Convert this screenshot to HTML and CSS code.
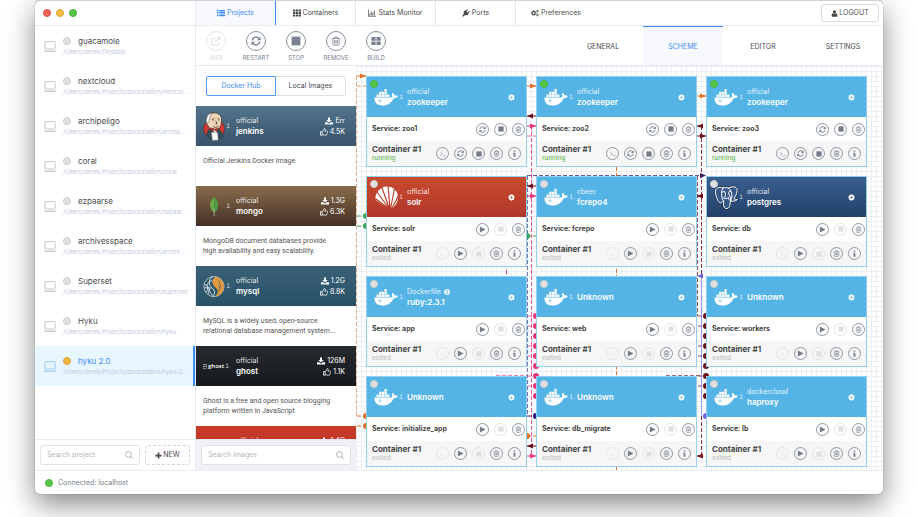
FILE: index.html
```html
<!DOCTYPE html>
<html lang="en">
<head>
<meta charset="utf-8">
<title>DockStation</title>
<link rel="stylesheet" href="styles.css">
</head>
<body>
<svg class="sprite" aria-hidden="true">
  <symbol id="i-monitor" viewBox="0 0 12 11"><rect x="1" y=".6" width="10" height="7.4" rx=".6" fill="none" stroke="currentColor"/><path d="M0 10.2h12" stroke="currentColor" stroke-width="1.2"/></symbol>
  <symbol id="i-list" viewBox="0 0 16 14"><path d="M0 1h3v2.4H0zM0 4.4h3v2.4H0zM0 7.8h3v2.4H0zM0 11.2h3v2.4H0zM4.500 1H16v2.400H4.500zM4.500 4.400H16v2.400H4.500zM4.500 7.800H16v2.400H4.500zM4.500 11.200H16v2.400H4.500z" fill="currentColor"/></symbol>
  <symbol id="i-grid" viewBox="0 0 16 14"><path d="M0 0h4.500v4H0zM5.700 0h4.500v4H5.700zM11.400 0H16v4h-4.600zM0 5h4.500v4H0zM5.700 5h4.500v4H5.700zM11.400 5H16v4h-4.600zM0 10h4.500v4H0zM5.700 10h4.500v4H5.700zM11.400 10H16v4h-4.600z" fill="currentColor"/></symbol>
  <symbol id="i-chart" viewBox="0 0 16 14"><path d="M.6 0v13.400H16M3.600 11.500V8M6.600 11.500V4M9.600 11.500V6M12.800 11.500V2" fill="none" stroke="currentColor" stroke-width="1.600"/></symbol>
  <symbol id="i-plug" viewBox="0 0 16 16"><path d="M10 1.200a1 1 0 0 1 1.500 1.300L9 5l2 2 2.700-2.600a1 1 0 0 1 1.300 1.500L12.400 8.500l1.200 1.200-1.200 1.300c-1.900 1.900-4.500 2.100-6.400 1L3.200 15H1v-2.200l2.800-2.800C2.700 8 3 5.500 4.900 3.600L6.200 2.400l1.200 1.200z" fill="currentColor"/></symbol>
  <symbol id="i-cogs" viewBox="0 0 18 16"><g fill="none" stroke="currentColor"><circle cx="6" cy="8" r="3.600" stroke-width="2.600"/><circle cx="6" cy="8" r="5.300" stroke-width="1.600" stroke-dasharray="2.100 2.060"/><circle cx="14.500" cy="3.600" r="1.700" stroke-width="1.500"/><circle cx="14.500" cy="3.600" r="2.700" stroke-width="1" stroke-dasharray="1.400 1.430"/><circle cx="14.500" cy="12.400" r="1.700" stroke-width="1.500"/><circle cx="14.500" cy="12.400" r="2.700" stroke-width="1" stroke-dasharray="1.400 1.430"/></g></symbol>
  <symbol id="i-user" viewBox="0 0 14 16"><circle cx="7" cy="4.400" r="3.700" fill="currentColor"/><path d="M3.500 7.400C1 8 .4 10.500.4 13c0 1.500 1 2.400 2.300 2.400h8.600c1.300 0 2.300-.9 2.300-2.400 0-2.500-.6-5-3.100-5.600C8.300 9.300 5.700 9.300 3.500 7.400z" fill="currentColor"/></symbol>
  <symbol id="i-cog" viewBox="0 0 16 16"><g fill="none" stroke="currentColor"><circle cx="8" cy="8" r="4.300" stroke-width="3.600"/><circle cx="8" cy="8" r="6.700" stroke-width="2.200" stroke-dasharray="2.800 2.460" stroke-dashoffset="1.400"/></g></symbol>
  <symbol id="i-web" viewBox="0 0 16 16"><path d="M8 3.500H3A1.500 1.500 0 0 0 1.500 5v8A1.500 1.500 0 0 0 3 14.500h8a1.500 1.500 0 0 0 1.500-1.500V9.500M6 10l7.500-7.500M9.500 1.700h5v5" fill="none" stroke="currentColor" stroke-width="1.700"/></symbol>
  <symbol id="i-refresh" viewBox="0 0 16 16"><path d="M2 7a6.200 6.200 0 0 1 10.800-3.200M14 9a6.200 6.200 0 0 1-10.800 3.200" fill="none" stroke="currentColor" stroke-width="2.200"/><path d="M15.300.8v6h-6zM.7 15.200v-6h6z" fill="currentColor"/></symbol>
  <symbol id="i-stop" viewBox="0 0 16 16"><path d="M1 1h14v14H1z" fill="currentColor"/></symbol>
  <symbol id="i-play" viewBox="0 0 16 16"><path d="M2 1l13 7-13 7z" fill="currentColor"/></symbol>
  <symbol id="i-trash" viewBox="0 0 16 16"><path d="M1.500 4h13M5.300 4l.8-2.500h3.800l.8 2.500M3 4.300V13c0 1 .6 1.700 1.500 1.700h7c.9 0 1.500-.7 1.500-1.700V4.300M6 6.500v5.700M8 6.500v5.700M10 6.500v5.700" fill="none" stroke="currentColor" stroke-width="1.300"/></symbol>
  <symbol id="i-build" viewBox="0 0 16 16"><path d="M1.500 1.500h5.300a.6.600 0 0 1 .6.600v5.300H1.500A1 1 0 0 1 .5 6.400V2.500a1 1 0 0 1 1-1zM8.700 1.500h5.800a1 1 0 0 1 1 1v3.900a1 1 0 0 1-1 1H8.700zM1.500 8.700h5.900v5.800H1.500a1 1 0 0 1-1-1V9.700a1 1 0 0 1 1-1zM8.700 8.700h5.800a1 1 0 0 1 1 1v3.800a1 1 0 0 1-1 1H8.700z" fill="currentColor"/></symbol>
  <symbol id="i-term" viewBox="0 0 16 16"><path d="M1 3l5 4.500L1 12M7 13h8" fill="none" stroke="currentColor" stroke-width="1.500"/></symbol>
  <symbol id="i-info" viewBox="0 0 16 16"><path d="M6.200 1h3.600v3.200H6.200zM4.600 6h5.200v7h1.600v2H4.600v-2h1.600V8H4.600z" fill="currentColor"/></symbol>
  <symbol id="i-download" viewBox="0 0 16 16"><path d="M6 1h4v5h3.500L8 11.200 2.500 6H6zM0 10.500h4.600L8 13.300l3.400-2.800H16V15H0z" fill="currentColor"/></symbol>
  <symbol id="i-thumb" viewBox="0 0 16 16"><path d="M1 7h3.300v7.500H1zM4.300 7.300C6 6.500 6.500 5 7.200 3.800 7.600 3 7.400 1.200 8.600 1c1.700-.1 2.200 1.700 1.700 3.200L9.600 6h4c1.400 0 1.800 1.400 1 2.300.6.800.5 1.600-.3 2.200.3.900 0 1.500-.7 1.900.2 1.300-.6 2.100-2 2.100-3 .1-4.300-.6-7.300-1.300" fill="none" stroke="currentColor" stroke-width="1.500"/></symbol>
  <symbol id="i-search" viewBox="0 0 16 16"><circle cx="7" cy="7" r="5.800" fill="none" stroke="currentColor" stroke-width="1.500"/><path d="M11 11l4.500 4.500" stroke="currentColor" stroke-width="1.800"/></symbol>
  <symbol id="i-plus" viewBox="0 0 16 16"><path d="M6 1h4v5h5v4h-5v5H6v-5H1V6h5z" fill="currentColor"/></symbol>
  <symbol id="i-alert" viewBox="0 0 16 16"><circle cx="8" cy="8" r="8" fill="currentColor"/><path d="M6.800 3h2.400v6H6.800zM6.800 10.500h2.400V13H6.800z" fill="#54b4e6"/></symbol>
  <symbol id="l-docker" viewBox="0 0 50 36"><g fill="#fff"><path d="M5 12h4.600v4.800H5zM10.300 12h4.600v4.800h-4.600zM15.600 12h4.600v4.800h-4.600zM20.900 12h4.600v4.800h-4.600zM26.200 12h4.600v4.800h-4.600zM10.300 6.500h4.600v4.800h-4.600zM15.600 6.500h4.600v4.800h-4.600zM20.900 6.500h4.600v4.800h-4.600zM20.900 1h4.600v4.800h-4.600z"/><path d="M1 18h30c3 0 5-.8 6.200-2-2-2.500-1.800-5 0-7.500 2.300 1.500 3.500 3.300 3.600 5.500 2.500-.6 5-.3 7 1-1.300 3.200-4 4.500-8.500 4.400C35.500 28.500 28 34 17 34 6 34 .6 28.500 1 18z"/></g><circle cx="12" cy="24.500" r="2" fill="#fff" stroke="#54b4e6" stroke-width="1.200"/></symbol>
  <symbol id="l-solr" viewBox="0 0 50 50"><path d="M3 30C1 18 10 5 24 3c14-1 24 9 24 22 0 10-7 18-13 23l-8-2z" fill="#fff"/><path d="M31 48 5 37M31 48 1 26M31 48 5 13M31 48 15 3M32 48 28-1M33 48 42 2M35 48 52 16" fill="none" stroke="#bd422f" stroke-width="2.400"/></symbol>
  <symbol id="l-postgres" viewBox="0 0 50 50"><g fill="#36598a" stroke="#1b2c47" stroke-width="4.500" stroke-linejoin="round"><path d="M18 6C10 2 2 6 3 16c1 8 5 18 9 20 3 1 4-3 7-5 0 6-1 14 4 16 5 1 9-2 9-8l1-7c6 1 12 0 14-3-2 0-5 0-7-2 5-7 9-19 4-22-5-3-11-1-15 1-4-1-8-1-11 0z"/></g><g fill="#36598a" stroke="#fff" stroke-width="2" stroke-linejoin="round" stroke-linecap="round"><path d="M18 6C10 2 2 6 3 16c1 8 5 18 9 20 3 1 4-3 7-5 0 6-1 14 4 16 5 1 9-2 9-8l1-7c6 1 12 0 14-3-2 0-5 0-7-2 5-7 9-19 4-22-5-3-11-1-15 1-4-1-8-1-11 0z"/><path d="M18 6c-4 5-3 12-2 18 0 3 0 5 3 7M29 6c5 4 7 10 7 18-1 4-2 5-3 8M22 14c-3-2-5-1-6 1M33 13c-2-1-4 0-4 2 0 5 6 9 4 16-3-1-4-3-4-6-3 2-7 3-10 1 4-2 5-6 3-12" fill="none"/></g></symbol>
  <symbol id="l-jenkins" viewBox="0 0 50 66"><ellipse cx="25" cy="38" rx="24" ry="22" fill="#d33833" stroke="#222"/><path d="M8 24C6 8 16 1 27 2c11 1 17 9 15 21-1 11-6 18-14 18S11 36 8 24z" fill="#f0d6b7" stroke="#222" stroke-width="1.500"/><path d="M8 27C5 12 12 2 24 2c-7 4-9 8-9 14l-2 6z" fill="#fff" stroke="#222"/><path d="M20 17l6-2M33 15l5 2M22 20h2M35 20h2M29 20l3 7h-4M23 33c5 3 9 2 13-1" fill="none" stroke="#222" stroke-width="1.600"/><path d="M12 40l14 4 12-5 8 16-10 8H20L8 54z" fill="#335061" stroke="#222"/><path d="M22 41l6 9 5-10z" fill="#fff"/><path d="M25 38l-6-2v8l6-3 8 4 1-8-8 2z" fill="#d33833" stroke="#222"/><path d="M19 46h14l2 18-14 1z" fill="#fff" stroke="#555"/></symbol>
  <symbol id="l-mongo" viewBox="-16 -12 55 75"><path d="M12 1C5 9 1 16 2 24c1 8 5 13 10 17z" fill="#6cac48"/><path d="M12 1c7 8 11 15 10 23-1 8-5 13-10 17z" fill="#4d9a3f"/><path d="M12 30v20" stroke="#b8b79d" stroke-width="2"/></symbol>
  <symbol id="l-mysql" viewBox="0 0 50 50"><circle cx="25" cy="25" r="23" fill="none" stroke="#dfe8ec" stroke-width="1.500"/><path d="M28 3c14 2 22 14 19 27-2 9-10 17-20 18 8-7 9-14 2-20-8-7-11-16-1-25z" fill="#e4993c"/><path d="M21 3C12 11 12 21 20 28c8 6 8 13 2 20M3 20c7 2 11 8 12 14s5 10 9 13M7 38c4-4 4-11 2-17 4-7 8-9 13-9M3 28h12M13 42c-2-9 0-13 7-14" fill="none" stroke="#dfe8ec" stroke-width="2"/><path d="M33 9c6 6 8 13 5 20M31 39c8-4 9-10 4-17" stroke="#3a5c70" fill="none" stroke-width="1.500"/></symbol>
  <symbol id="l-ghost" viewBox="0 0 10 12"><path d="M0 1.500h10M0 6h4M6 6h4M0 10.500h6M8 10.500h2" stroke="#fff" stroke-width="2" opacity=".8"/></symbol>
</svg>

<div class="window">
  <header class="titlebar">
    <div class="lights"><i class="light red"></i><i class="light amber"></i><i class="light green"></i></div>
    <nav class="main-tabs">
      <a class="main-tab active" href="#projects"><svg class="ico8"><use href="#i-list"/></svg>Projects</a>
      <a class="main-tab" href="#containers"><svg class="ico8"><use href="#i-grid"/></svg>Containers</a>
      <a class="main-tab" href="#stats"><svg class="ico8"><use href="#i-chart"/></svg>Stats Monitor</a>
      <a class="main-tab" href="#ports"><svg class="ico8"><use href="#i-plug"/></svg>Ports</a>
      <a class="main-tab" href="#preferences"><svg class="ico8"><use href="#i-cogs"/></svg>Preferences</a>
    </nav>
    <button class="logout"><svg class="ico7"><use href="#i-user"/></svg>LOGOUT</button>
  </header>

  <div class="body">
    <aside class="sidebar">
      <nav class="projects" id="projects"></nav>
      <div class="side-foot">
        <label class="search"><input type="text" placeholder="Search project" aria-label="Search project"><svg class="ico8"><use href="#i-search"/></svg></label>
        <button class="new"><svg class="ico7"><use href="#i-plus"/></svg>NEW</button>
      </div>
    </aside>

    <main class="main">
      <div class="toolbar">
        <div class="tools">
          <button class="tool off"><span class="ring"><svg class="ico10"><use href="#i-web"/></svg></span>WEB</button>
          <button class="tool"><span class="ring"><svg class="ico10"><use href="#i-refresh"/></svg></span>RESTART</button>
          <button class="tool"><span class="ring"><svg class="ico10"><use href="#i-stop"/></svg></span>STOP</button>
          <button class="tool"><span class="ring"><svg class="ico10"><use href="#i-trash"/></svg></span>REMOVE</button>
          <button class="tool"><span class="ring"><svg class="ico10"><use href="#i-build"/></svg></span>BUILD</button>
        </div>
        <nav class="views">
          <a class="view" href="#general">GENERAL</a>
          <a class="view active" href="#scheme">SCHEME</a>
          <a class="view" href="#editor">EDITOR</a>
          <a class="view" href="#settings">SETTINGS</a>
        </nav>
      </div>

      <div class="work">
        <section class="images">
          <div class="segment">
            <button class="seg active">Docker Hub</button>
            <button class="seg">Local Images</button>
          </div>
          <div class="image-list" id="images"></div>
          <div class="images-foot">
            <label class="search"><input type="text" placeholder="Search images" aria-label="Search images"><svg class="ico8"><use href="#i-search"/></svg></label>
          </div>
        </section>

        <section class="scheme" id="scheme">
          <svg class="wires" id="wires" viewBox="356 66 527 404" aria-hidden="true"></svg>
        </section>
      </div>
    </main>
  </div>

  <footer class="status"><i class="dot green"></i>Connected: localhost</footer>
</div>
<script src="app.js"></script>
</body>
</html>
```
FILE: styles.css
```css
* { box-sizing: border-box; }
body {
  margin: 0;
  padding: 0 35px 23px;
  background: #fff;
  color: #4a4a4a;
  font: 7px/10px Inter, "Liberation Sans", sans-serif;
  overflow: hidden;
}
a { color: inherit; text-decoration: none; }
button { margin: 0; padding: 0; border: 0; background: none; color: inherit; font: inherit; }
svg { display: block; flex: none; }
.sprite { display: none; }
.ico6 { width: 6px; height: 6px; }
.ico7 { width: 7px; height: 7px; }
.ico8 { width: 8px; height: 8px; }
.ico10 { width: 10px; height: 10px; }

.window {
  display: flex;
  flex-direction: column;
  height: calc(100vh - 23px);
  border-top: 1px solid #d2d2d2;
  border-radius: 5px;
  background: #fff;
  box-shadow: 0 0 1px rgba(0, 0, 0, .5), 0 10px 28px rgba(0, 0, 0, .48);
}

.titlebar { display: flex; height: 25px; border-bottom: 1px solid #e9ebf2; align-items: center; }
.lights { display: flex; width: 160px; padding-left: 8px; gap: 5px; }
.light { width: 8px; height: 8px; border-radius: 50%; }
.light.red { background: #ee5f54; border: 1px solid #dd5145; }
.light.amber { background: #f5bd41; border: 1px solid #dfa634; }
.light.green { background: #59c646; border: 1px solid #45b034; }
.main-tabs { display: flex; flex: 1; align-self: stretch; border-left: 1px solid #e9ebf2; }
.main-tab {
  display: flex;
  width: 80px;
  align-items: center;
  justify-content: center;
  gap: 2px;
  border-right: 1px solid #e4e6ee;
}
.main-tab:last-child { border-right: 0; }
.main-tab.active { background: #f7f9fc; color: #3c8df5; border-right: 1px solid #3c86e8; }
.logout {
  display: flex;
  width: 58px;
  height: 18px;
  margin-right: 4px;
  align-items: center;
  justify-content: center;
  gap: 1px;
  border: 1px solid #dcdcdc;
  border-radius: 3px;
}

.body { display: flex; flex: 1; min-height: 0; }
.sidebar { display: flex; flex-direction: column; width: 160px; flex: none; }
.projects { flex: 1; min-height: 0; overflow: hidden; }
.project {
  display: grid;
  grid-template-columns: 12px 8px 1fr;
  column-gap: 7px;
  height: 40px;
  padding: 9px 4px 0 9px;
  grid-template-rows: 12px 10px;
  align-items: center;
}
.project svg { width: 12px; height: 11px; grid-row: 1 / 3; color: #c4c4c4; }
.dot { width: 8px; height: 8px; border-radius: 50%; background: #e0e0e0; border: 1px solid #cfcfcf; }
.dot.green { background: #56c548; border-color: #4bb53d; }
.dot.amber { background: #f5b93b; border-color: #dba237; }
.project .name { font-size: 8px; }
.project .path {
  grid-column: 2 / 4;
  color: #c3cadb;
  font-size: 6px;
  white-space: nowrap;
}
.project.active { background: #e7f6ff; color: #3c8df5; border-right: 2px solid #3c8df5; padding-right: 2px; }
.project.active svg { color: #9ccbf5; }
.side-foot { display: flex; height: 31px; padding: 5px; gap: 5px; border-top: 1px solid #e9ebf2; }
.search {
  display: flex;
  flex: 1;
  min-width: 0;
  height: 20px;
  padding: 0 6px;
  align-items: center;
  border: 1px solid #dfe1e6;
  border-radius: 3px;
  background: #fff;
  color: #999;
}
.search input { flex: 1; min-width: 0; padding: 0; border: 0; outline: 0; background: none; font: inherit; }
.search input::placeholder { color: #b5b5b5; opacity: 1; }
.new {
  display: flex;
  width: 45px;
  height: 20px;
  align-items: center;
  justify-content: center;
  gap: 1px;
  border: 1px dashed #d5d5d5;
  border-radius: 3px;
}

.main { display: flex; flex: 1; flex-direction: column; min-width: 0; border-left: 1px solid #e9ebf2; }
.toolbar { display: flex; height: 40px; justify-content: space-between; border-bottom: 1px solid #e4e7f0; }
.tools { display: flex; padding-top: 5px; }
.tool { display: flex; flex-direction: column; width: 40px; height: 32px; align-items: center; gap: 1px; color: #798291; font-size: 6px; line-height: 11px; }
.tool.off { color: #e1e1e1; }
.ring { display: flex; width: 20px; height: 20px; flex: none; align-items: center; justify-content: center; border: 1px solid #8a919d; border-radius: 50%; }
.off .ring { border-color: #e6e6e6; }
.views { display: flex; }
.view { display: flex; width: 80px; padding-top: 1px; align-items: center; justify-content: center; border-top: 1px solid transparent; }
.view.active { background: #f7f9fc; color: #3c8df5; border-top-color: #3c8df5; }

.work { display: flex; flex: 1; min-height: 0; }
.images { display: flex; flex-direction: column; width: 160px; flex: none; }
.segment { display: flex; margin: 10px; flex: none; }
.seg { width: 50%; height: 20px; border: 1px solid #e0e0e0; border-left: 0; border-radius: 0 2px 2px 0; }
.seg.active { border: 1px solid #4f9af6; border-radius: 2px 0 0 2px; color: #3c8df5; }
.image-list { flex: 1; min-height: 0; overflow: hidden; }
.image-head { display: flex; height: 40px; padding: 0 11px 0 7px; align-items: center; color: #fff; }
.image-head .logo { display: flex; width: 33px; align-items: center; gap: 1px; }
.image-head .art { width: 22px; height: 31px; }
.image-head .titles { flex: 1; }
.titles { line-height: 11px; }
.org { display: flex; align-items: center; gap: 3px; opacity: .85; }
.title { display: block; font-size: 8px; font-weight: 600; }
.tiny { color: #fff; opacity: .7; font: 7px/8px "Liberation Mono", monospace; }
.ghost { display: flex; align-items: center; gap: 1px; font: 600 6px/10px "Open Sans", sans-serif; }
.ghost svg { width: 4px; height: 5px; }
.counts { line-height: 11px; }
.count { display: flex; align-items: center; justify-content: flex-end; gap: 2px; }
.jenkins { background: linear-gradient(#52758c, #38526a); }
.mongo { background: linear-gradient(#8a6d4b, #432e26); }
.mysql { background: linear-gradient(#3c6177, #285166); }
.ghost-bg { background: linear-gradient(#272b30, #15181d); }
.solr { background: linear-gradient(#c94a2e, #b1372b); }
.redis { background: linear-gradient(#cb3c2c, #a92b20); }
.postgres { background: linear-gradient(#3a608f, #224069); }
.docker { background: #54b4e6; }
.image-text { height: 40px; margin: 0; padding: 10px 0 0 7px; font-family: Roboto, sans-serif; color: #555; white-space: nowrap; }
.images-foot { display: flex; height: 31px; flex: none; padding: 5px; border-top: 1px solid #e4e7f0; background: #eff1f6; }

.scheme {
  position: relative;
  display: grid;
  flex: 1;
  grid-template-columns: repeat(3, 161px);
  gap: 9px;
  align-content: start;
  padding: 10px;
  overflow: hidden;
  background-color: #fff;
  background-image: linear-gradient(#ecf0f5 1px, transparent 1px), linear-gradient(90deg, #ecf0f5 1px, transparent 1px);
  background-size: 5px 5px;
}
.wires { position: absolute; left: 0; top: 0; width: 527px; height: 404px; }
.card { position: relative; height: 91px; border: 1px solid #93d0ef; background: #fff; color: #444; }
.card-head { display: flex; height: 40px; padding: 0 11px 0 7px; align-items: center; color: #fff; }
.card-head .logo { display: flex; width: 33px; align-items: center; }
.card-head .art { width: 25px; height: 25px; }
.card-head .titles { flex: 1; }
.card .dot { position: absolute; left: 3px; top: 3px; }
.gear { display: flex; }
.row { display: flex; height: 25px; align-items: center; justify-content: space-between; padding: 0 5px; }
.row.service { height: 24px; padding-right: 1px; font-weight: 700; }
.row.container { background: #f6f6f6; }
.acts { display: flex; gap: 5px; }
.act {
  display: flex;
  width: 13px;
  height: 13px;
  align-items: center;
  justify-content: center;
  border: 1px solid #8f95a0;
  border-radius: 50%;
  color: #747c8a;
}
.act.off { border-color: #e4e4e4; color: #e0e0e0; }
.label { padding-top: 1px; line-height: 9px; }
.label b { display: block; font-size: 8px; font-weight: 700; }
.state { display: block; font-family: Roboto, sans-serif; color: #bcbcbc; }
.state.running { color: #56b748; }

.status { display: flex; height: 24px; flex: none; padding-left: 10px; align-items: center; gap: 5px; border-top: 1px solid #e9ebf2; color: #777f8a; }
```
FILE: app.js
```js
const use = (id, cls) => `<svg class="${cls}"><use href="#${id}"/></svg>`;

// Project list
const projects = [
  ['guacamole', 'Desktop'],
  ['nextcloud', 'Projects/dockstation/nextclo...'],
  ['archipeligo', 'Projects/dockstation/archip...'],
  ['coral', 'Projects/dockstation/coral'],
  ['ezpaarse', 'Projects/dockstation/ezpaar...'],
  ['archivesspace', 'Projects/dockstation/archiv...'],
  ['Superset', 'Projects/dockstation/superset'],
  ['Hyku', 'Projects/dockstation/hyku'],
  ['hyku 2.0', 'Projects/dockstation/hyku-2...', true],
];
document.getElementById('projects').innerHTML = projects.map(([name, path, active]) => `
  <a class="project${active ? ' active' : ''}" href="#${name}">
    ${use('i-monitor', '')}<i class="dot${active ? ' amber' : ''}"></i>
    <span class="name">${name}</span><span class="path">/Users/derek/${path}</span>
  </a>`).join('');

// Image catalogue
const images = [
  ['jenkins', 'jenkins', 'Err', '4.5K', 'Official Jenkins Docker image'],
  ['mongo', 'mongo', '1.3G', '6.3K', 'MongoDB document databases provide<br>high availability and easy scalability.'],
  ['mysql', 'mysql', '1.2G', '8.8K', 'MySQL is a widely used, open-source<br>relational database management system...'],
  ['ghost', 'ghost-bg', '126M', '1.1K', 'Ghost is a free and open source blogging<br>platform written in JavaScript'],
  ['redis', 'redis', '1.4G', '5.6K', ''],
];
document.getElementById('images').innerHTML = images.map(([name, theme, pulls, stars, text]) => `
  <article>
    <div class="image-head ${theme}">
      <span class="logo">${name === 'ghost' ? `<span class="ghost">${use('l-ghost', '')}ghost</span>` : use('l-' + (name === 'redis' ? 'docker' : name), 'art')}<span class="tiny">i</span></span>
      <span class="titles"><span class="org">official</span><span class="title">${name}</span></span>
      <span class="counts">
        <span class="count">${use('i-download', 'ico8')}${pulls}</span>
        <span class="count">${use('i-thumb', 'ico8')}${stars}</span>
      </span>
    </div>
    <p class="image-text">${text}</p>
  </article>`).join('');

// Service nodes
const act = (icon, label, off) =>
  `<button class="act${off ? ' off' : ''}" aria-label="${label}"${off ? ' disabled' : ''}>${use('i-' + icon, icon === 'stop' || icon === 'term' ? 'ico6' : 'ico7')}</button>`;
const nodes = [
  ['official', 'zookeeper', 'zoo1', 'docker', true],
  ['official', 'zookeeper', 'zoo2', 'docker', true],
  ['official', 'zookeeper', 'zoo3', 'docker', true],
  ['official', 'solr', 'solr', 'solr'],
  ['cbeer', 'fcrepo4', 'fcrepo', 'docker'],
  ['official', 'postgres', 'db', 'postgres'],
  ['Dockerfile', 'ruby:2.3.1', 'app', 'docker'],
  ['', 'Unknown', 'web', 'docker'],
  ['', 'Unknown', 'workers', 'docker'],
  ['', 'Unknown', 'initialize_app', 'docker'],
  ['', 'Unknown', 'db_migrate', 'docker'],
  ['dockercloud', 'haproxy', 'lb', 'docker'],
];
document.getElementById('scheme').insertAdjacentHTML('beforeend', nodes.map(([org, title, service, theme, on]) => {
  const run = on ? act('refresh', 'Restart') + act('stop', 'Stop') : act('play', 'Start') + act('stop', 'Stop', true);
  return `
  <article class="card">
    <div class="card-head ${theme}">
      <span class="logo">${use('l-' + theme, 'art')}<span class="tiny">i</span></span>
      <span class="titles">${org ? `<span class="org">${org}${org === 'Dockerfile' ? use('i-alert', 'ico6') : ''}</span>` : ''}<span class="title">${title}</span></span>
      <button class="gear" aria-label="Settings">${use('i-cog', 'ico7')}</button>
    </div>
    <i class="dot${on ? ' green' : ''}"></i>
    <div class="row service"><span>Service: ${service}</span><span class="acts">${run}${act('trash', 'Remove')}</span></div>
    <div class="row container">
      <span class="label"><b>Container #1</b><span class="state${on ? ' running' : ''}">${on ? 'running' : 'exited'}</span></span>
      <span class="acts">${act('term', 'Terminal', !on)}${run}${act('trash', 'Remove')}${act('info', 'Info')}</span>
    </div>
  </article>`;
}).join(''));

// Connections between nodes
const orange = '#e0702a', pink = '#e8347c', maroon = '#6f0f16', navy = '#2b1a7c', green = '#35a552', violet = '#6a60e0';
const line = (x1, y1, x2, y2, c, solid, o = 1) =>
  `<path d="M${x1} ${y1}L${x2} ${y2}" stroke="${c}" opacity="${o}"${solid ? '' : ' stroke-dasharray="4 2"'}/>`;
const dot = (x, y, c) => `<circle cx="${x}" cy="${y}" r="3" fill="${c}"/>`;
const right = (x, y, c) => `<path d="M${x} ${y}l-6-2.500v5z" fill="${c}"/>`;
const left = (x, y, c) => `<path d="M${x} ${y}l6-2.500v5z" fill="${c}"/>`;
let w = '';
w += line(356.5, 76, 356.5, 416, orange, false, .5);
w += line(357, 76, 366, 76, orange) + right(366, 76, orange) + line(357, 86, 366, 86, orange, false, .6);
[216, 226].forEach(y => { w += line(357, y, 366, y, green) + dot(366, y, green); });
[416, 426].forEach(y => { w += line(357, y, 366, y, orange) + dot(366, y, orange); });
w += line(527, 86, 536, 86, orange) + right(536, 86, orange) + line(697, 96, 706, 96, orange) + right(706, 96, orange);
w += line(531.5, 126, 531.5, 456, pink, false, .8) + line(527, 136, 536, 136, pink, false, .7);
w += line(527.5, 176, 527.5, 416, navy, false, .6) + line(527, 175.5, 706, 175.5, navy, false, .7) + right(706, 175.5, navy);
[116, 186, 446].forEach(y => { w += line(527, y, 536, y, maroon) + left(527, y, maroon); });
[126, 196, 456].forEach(y => { w += line(527, y, 536, y, pink) + right(536, y, pink); });
w += line(527, 236, 536, 236, green) + dot(527, 236, green) + line(527, 436, 536, 436, orange) + dot(527, 436, orange);
[316, 326, 336, 346, 356, 366, 376, 386, 396].forEach((y, i) => {
  w += dot(536, y, pink) + dot(706, y, maroon);
  if (i % 3 !== 2) w += line(528, y, 536, y, pink, false, .7) + line(698, y, 706, y, maroon, false, .7);
});
w += line(527, 416, 536, 416, navy) + dot(536, 416, navy);
w += line(496, 375.5, 527, 375.5, pink, false, .6) + line(666, 375.5, 702, 375.5, maroon, false, .6);
w += line(506.5, 270, 506.5, 274, pink) + line(616.5, 167, 616.5, 470, orange);
w += line(697.5, 176, 697.5, 316, maroon, false, .7) + line(701.5, 126, 701.5, 276, maroon, false, .8);
w += line(701.5, 416, 701.5, 456, maroon, false, .8) + line(701.5, 276, 701.5, 416, violet, true, .6);
[126, 196, 456].forEach(y => { w += line(697, y, 702, y, maroon) + left(697, y, maroon); });
w += line(697, 136, 706, 136, maroon) + right(706, 136, maroon);
w += left(697, 276, violet) + dot(706, 416, violet);
document.getElementById('wires').innerHTML = w;
```
